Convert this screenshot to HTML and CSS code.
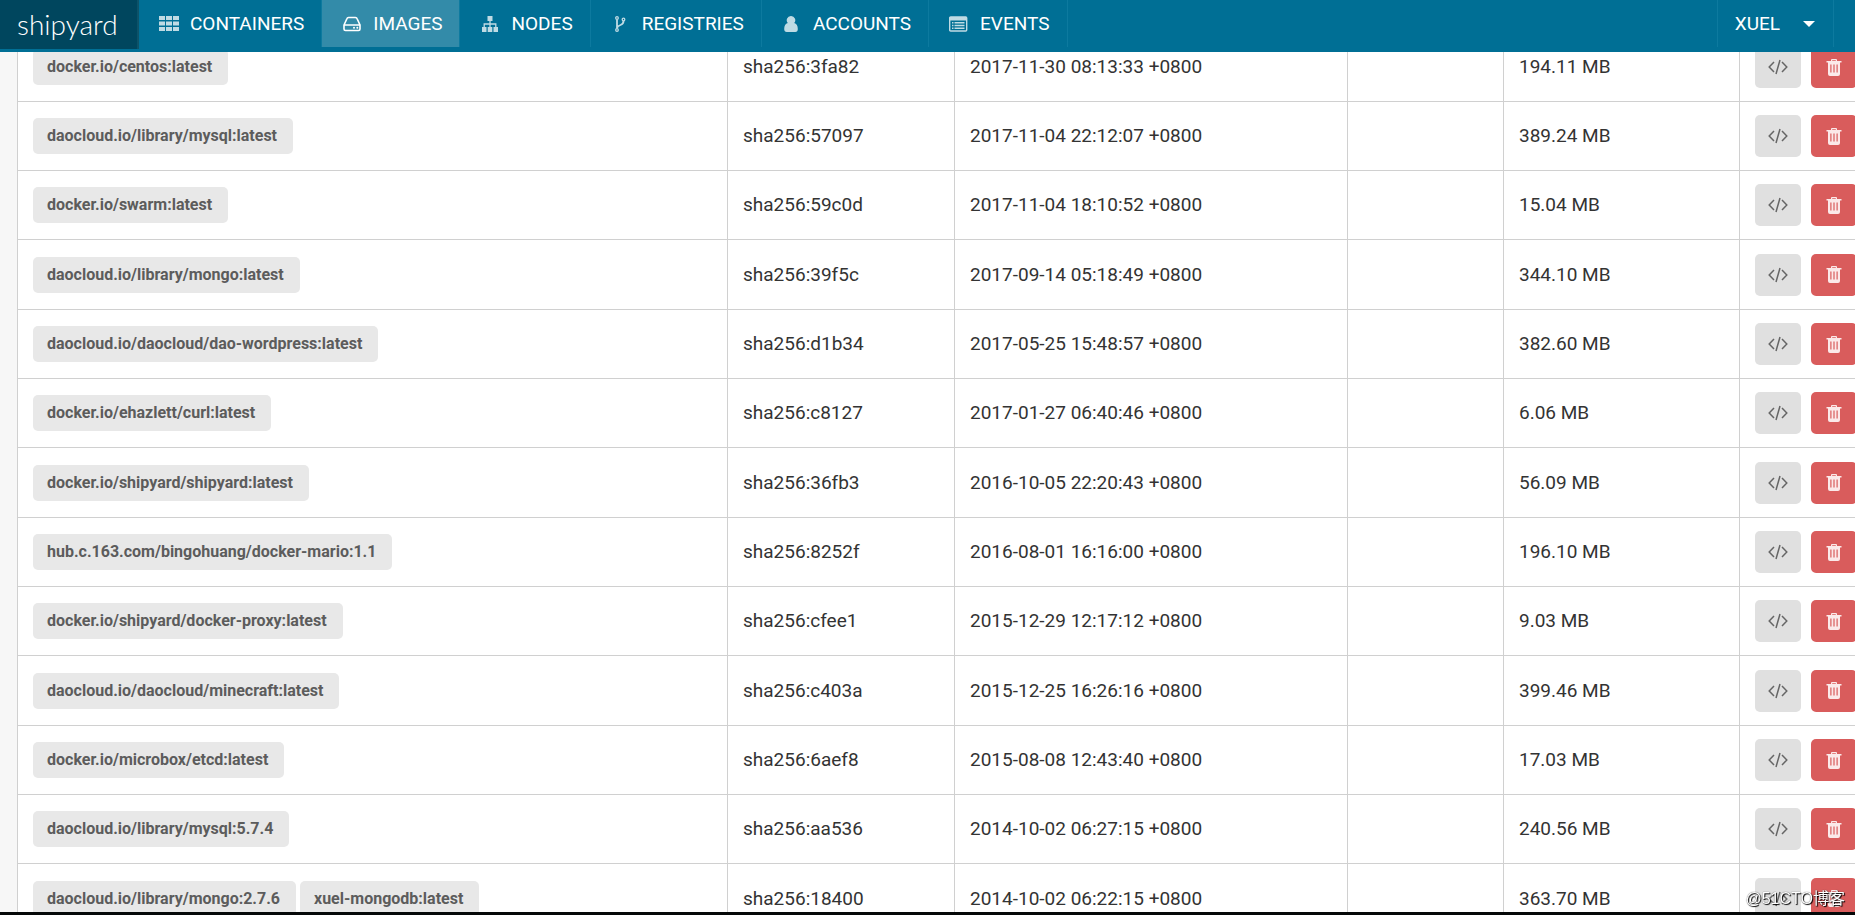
FILE: index.html
```html
<!DOCTYPE html>
<html lang="en">
<head>
<meta charset="utf-8">
<title>shipyard</title>
<link rel="stylesheet" href="styles.css">
</head>
<body>
<svg class="sprite" aria-hidden="true">
  <symbol id="code" viewBox="0 0 20 16"><path d="M6 3L1.2 8L6 13M14 3l4.8 5L14 13M12 1L8 15" fill="none" stroke="currentColor" stroke-width="1.5"/></symbol>
  <symbol id="trash" viewBox="0 0 16 17"><path fill-rule="evenodd" d="M5 2V1Q5 0 6 0h4q1 0 1 1v1h4.500v1.500H14V15q0 2-2 2H4q-2 0-2-2V3.500H.500V2zM6.200 1.200V2h3.600v-.800zM4.300 5.500v8h1.200v-8zM7.400 5.500v8h1.200v-8zM10.500 5.500v8h1.200v-8z" fill="currentColor"/></symbol>
</svg>
<header class="topbar">
  <a class="brand" href="#">shipyard</a>
  <nav class="menu">
    <a class="item" href="#"><svg class="icon" viewBox="0 0 20 16"><path d="M0 0h6v4H0zM7 0h6v4H7zM14 0h6v4h-6zM0 5.500h6v4H0zM7 5.500h6v4H7zM14 5.500h6v4h-6zM0 11h6v4H0zM7 11h6v4H7zM14 11h6v4h-6z" fill="currentColor"/></svg>CONTAINERS</a>
    <a class="item active" href="#"><svg class="icon" viewBox="0 0 20 16"><path d="M2 9L5 2.500Q5.300 1.500 6.500 1.500h7q1.200 0 1.500 1L18 9v4q0 1.500-1.500 1.500h-13Q2 14.500 2 13zM2 9h16" fill="none" stroke="currentColor" stroke-width="1.600"/><circle cx="12" cy="11.700" r="1" fill="currentColor"/><circle cx="15.300" cy="11.700" r="1" fill="currentColor"/></svg>IMAGES</a>
    <a class="item" href="#"><svg class="icon" viewBox="0 0 20 16"><path d="M7.500 0h5v5h-5zM2 11h4.500v5H2zM7.700 11h4.600v5H7.700zM13.500 11H18v5h-4.500z" fill="currentColor"/><path d="M10 5v6M4.200 11V8h11.600v3" fill="none" stroke="currentColor" stroke-width="1.300"/></svg>NODES</a>
    <a class="item" href="#"><svg class="icon" viewBox="0 0 20 16"><g fill="none" stroke="currentColor" stroke-width="1.300"><circle cx="6" cy="2" r="1.300"/><circle cx="6" cy="14" r="1.300"/><circle cx="12.500" cy="3.500" r="1.300"/><path stroke-width="1.800" d="M6 3.500v9M12.500 5q0 3-3 4T6 12"/></g></svg>REGISTRIES</a>
    <a class="item" href="#"><svg class="icon" viewBox="0 0 20 16"><path d="M9 0a4.200 4.200 0 0 1 3.200 7q3.600.800 3.600 6 0 3-2.500 3H4.700q-2.500 0-2.500-3 0-5.200 3.600-6A4.200 4.200 0 0 1 9 0z" fill="currentColor"/></svg>ACCOUNTS</a>
    <a class="item" href="#"><svg class="icon" viewBox="0 0 20 16"><path d="M1.700 1h15q1 0 1 1v12q0 1-1 1h-15q-1 0-1-1V2q0-1 1-1z" fill="none" stroke="currentColor" stroke-width="1.400"/><path d="M.700 1h17v3.500h-17z" fill="currentColor"/><path d="M3 6.800h1.500m1 0h10M3 9.500h1.500m1 0h10M3 12.200h1.500m1 0h10" stroke="currentColor" stroke-width="1.500"/></svg>EVENTS</a>
  </nav>
  <div class="menu account">
    <button class="item user" type="button">XUEL<svg class="caret" viewBox="0 0 12 6"><path d="M0 0h12L6 6z" fill="currentColor"/></svg></button>
    <button class="item search" type="button" aria-label="Search"><svg class="icon" viewBox="0 0 20 16"><circle cx="8" cy="8" r="6" fill="none" stroke="currentColor" stroke-width="2"/></svg></button>
  </div>
</header>
<main class="content">
  <table class="images">
    <colgroup><col><col class="c-id"><col class="c-date"><col class="c-node"><col class="c-size"><col class="c-act"></colgroup>
    <tbody id="rows"></tbody>
  </table>
</main>
<div class="taskbar"></div>
<div class="watermark">@51CTO博客</div>
<script src="rows.js"></script>
</body>
</html>
```
FILE: rows.js
```js
const images = [
  [["docker.io/centos:latest"], "3fa82", "2017-11-30 08:13:33", "194.11"],
  [["daocloud.io/library/mysql:latest"], "57097", "2017-11-04 22:12:07", "389.24"],
  [["docker.io/swarm:latest"], "59c0d", "2017-11-04 18:10:52", "15.04"],
  [["daocloud.io/library/mongo:latest"], "39f5c", "2017-09-14 05:18:49", "344.10"],
  [["daocloud.io/daocloud/dao-wordpress:latest"], "d1b34", "2017-05-25 15:48:57", "382.60"],
  [["docker.io/ehazlett/curl:latest"], "c8127", "2017-01-27 06:40:46", "6.06"],
  [["docker.io/shipyard/shipyard:latest"], "36fb3", "2016-10-05 22:20:43", "56.09"],
  [["hub.c.163.com/bingohuang/docker-mario:1.1"], "8252f", "2016-08-01 16:16:00", "196.10"],
  [["docker.io/shipyard/docker-proxy:latest"], "cfee1", "2015-12-29 12:17:12", "9.03"],
  [["daocloud.io/daocloud/minecraft:latest"], "c403a", "2015-12-25 16:26:16", "399.46"],
  [["docker.io/microbox/etcd:latest"], "6aef8", "2015-08-08 12:43:40", "17.03"],
  [["daocloud.io/library/mysql:5.7.4"], "aa536", "2014-10-02 06:27:15", "240.56"],
  [["daocloud.io/library/mongo:2.7.6", "xuel-mongodb:latest"], "18400", "2014-10-02 06:22:15", "363.70"]
];
document.getElementById("rows").innerHTML = images.map(([tags, id, date, size]) => `
<tr>
  <td><div class="tags">${tags.map(t => `<span class="tag">${t}</span>`).join("")}</div></td>
  <td>sha256:${id}</td><td>${date} +0800</td><td></td><td>${size} MB</td>
  <td><div class="actions">
    <button class="btn" type="button" aria-label="Inspect"><svg class="code"><use href="#code"/></svg></button>
    <button class="btn danger" type="button" aria-label="Remove"><svg class="trash"><use href="#trash"/></svg></button>
  </div></td>
</tr>`).join("");
```
FILE: styles.css
```css
* { box-sizing: border-box; }
html, body { height: 100%; }
body {
  margin: 0;
  overflow: hidden;
  background: #f7f7f7;
  color: #333;
  font: 19px/24px Roboto, "Noto Sans", sans-serif;
}
.sprite { display: none; }

.topbar {
  position: fixed;
  z-index: 2;
  top: 0;
  left: 0;
  right: 0;
  height: 52px;
  display: flex;
  align-items: flex-start;
  background: #006f95;
  overflow: hidden;
}
.brand {
  flex: none;
  width: 139px;
  height: 49px;
  padding-left: 17px;
  background: #00465e;
  border-right: 2px solid #0d5369;
  color: #fff;
  font: 300 28px/49px Lato, sans-serif;
  text-decoration: none;
}
.menu { display: flex; }
.item {
  display: flex;
  align-items: center;
  gap: 11px;
  height: 47px;
  padding: 0 17px 0 20px;
  border: 0;
  border-right: 1px solid #0d7a9f;
  background: none;
  color: #fff;
  font: inherit;
  text-decoration: none;
  white-space: nowrap;
}
.item.active { background: #338ba9; }
.icon { width: 20px; height: 16px; opacity: .75; }
.active .icon { opacity: 1; }
.account { margin-left: auto; margin-right: -37px; }
.user { gap: 23px; padding: 0 18px 0 17px; border-left: 1px solid #0d7a9f; }
.caret { width: 12px; height: 6px; }

.content { padding: 32px 0 0 17px; margin-right: -17px; }
.images {
  width: 100%;
  table-layout: fixed;
  border-collapse: collapse;
  background: #fff;
}
.c-id { width: 227px; }
.c-date { width: 393px; }
.c-node { width: 156px; }
.c-size { width: 236px; }
.c-act { width: 132px; }
.images td {
  height: 69px;
  padding: 0 15px;
  border: 1px solid #d0d0d0;
}
.images tr:nth-child(3n + 4) td { height: 70px; }
.tags { display: flex; gap: 4px; }
.tag {
  padding: 6px 16px 6px 14px;
  border-radius: 5px;
  background: #e8e8e8;
  color: #5c5c5c;
  font-size: 16px;
  font-weight: 700;
  white-space: nowrap;
}
.actions { display: flex; gap: 10px; }
.btn {
  flex: none;
  display: grid;
  place-items: center;
  width: 46px;
  height: 42px;
  padding: 0;
  border: 0;
  border-radius: 5px;
  background: #e0e0e0;
  color: #666;
}
.danger { background: #d95c5c; color: #fbe9e9; }
.code { width: 20px; height: 16px; }
.trash { width: 16px; height: 17px; }

.taskbar {
  position: fixed;
  z-index: 2;
  left: 0;
  right: 0;
  bottom: 0;
  height: 3px;
  background: #050808;
}
.watermark {
  position: fixed;
  z-index: 3;
  right: 10px;
  bottom: 4px;
  color: #fff;
  font: 16px/24px "Liberation Sans", "Noto Sans CJK SC", sans-serif;
  text-shadow: 1px 1px 1px #000, 0 0 1px #333;
}
```
